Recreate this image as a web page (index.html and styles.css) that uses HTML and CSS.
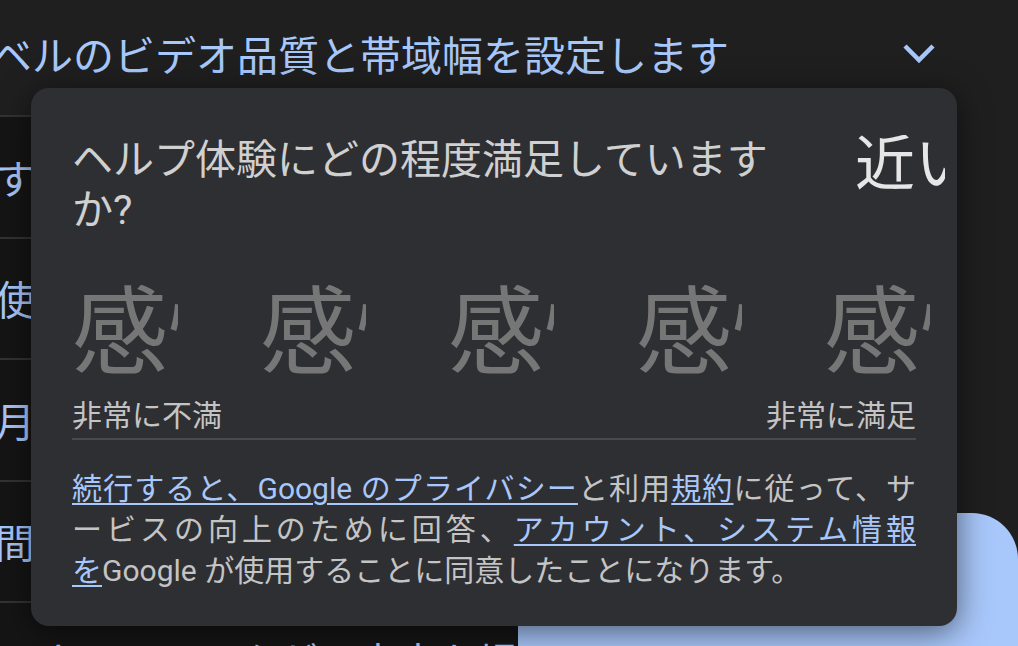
FILE: index.html
```html
<!DOCTYPE html>
<html lang="ja">
<head>
    <meta charset="UTF-8">
    <meta name="viewport" content="width=device-width, initial-scale=1.0">
    <link rel="stylesheet" href="styles.css">
    <title>ヘルプ</title>
</head>
<body>

<div class="page">
    <div class="topbar">
        <span class="topbar-title">ベルのビデオ品質と帯域幅を設定します</span>
        <svg class="chevron" width="34" height="22" viewBox="0 0 34 22">
            <path d="M3 4 L17 18 L31 4" fill="none" stroke="#a8c7fa" stroke-width="4.5"/>
        </svg>
    </div>

    <div class="content">
        <div class="list">
            <div class="list-row"><span class="row-text">すべての設定を表示</span></div>
            <div class="list-row"><span class="row-text">使用するデータ量</span></div>
            <div class="list-row"><span class="row-text">月間の上限</span></div>
            <div class="list-row"><span class="row-text">間隔を選択</span></div>
            <div class="list-row"><span class="row-text row-text-indent">ネットワークが不安定な場合</span></div>
        </div>
        <div class="side">
            <div class="fab"></div>
        </div>
    </div>

    <div class="feedback">
        <div class="feedback-head">
            <h2 class="feedback-title">ヘルプ体験にどの程度満足していますか?</h2>
            <span class="close-icon">近い</span>
        </div>

        <div class="ratings">
            <span class="rating-icon">感情</span>
            <span class="rating-icon">感情</span>
            <span class="rating-icon">感情</span>
            <span class="rating-icon">感情</span>
            <span class="rating-icon">感情</span>
        </div>

        <div class="rating-labels">
            <span>非常に不満</span>
            <span>非常に満足</span>
        </div>

        <p class="legal">
            <span class="legal-line"><a href="#">続行すると、Google のプライバシー</a>と利用<a href="#">規約</a>に従って、サ</span>
            <span class="legal-line">ービスの向上のために回答、<a href="#">アカウント、システム情報</a></span>
            <span class="legal-line"><a href="#">を</a>Google が使用することに同意したことになります。</span>
        </p>
    </div>
</div>

</body>
</html>
```

FILE: styles.css
```css
body {
    margin: 0;
    padding: 0;
    background-color: #1f1f1f;
    font-family: Roboto, "Noto Sans CJK JP", sans-serif;
    overflow: hidden;
}

.page {
    position: relative;
    width: 1018px;
    height: 646px;
    overflow: hidden;
}

.topbar {
    height: 115px;
    display: flex;
    align-items: center;
    justify-content: space-between;
    padding: 0 82px 10px 0;
    box-sizing: border-box;
}

.topbar-title {
    margin-left: -9px;
    font-size: 41px;
    color: #a8c7fa;
    white-space: nowrap;
}

.chevron {
    display: block;
}

.content {
    display: flex;
    height: 531px;
}

.list {
    width: 518px;
    background-color: #151515;
}

.list-row {
    height: 121.5px;
    display: flex;
    align-items: center;
    border-top: 2px solid #333;
    box-sizing: border-box;
    overflow: hidden;
}

.row-text {
    margin-left: -5px;
    font-size: 40px;
    color: #a8c7fa;
    white-space: nowrap;
}

.row-text-indent {
    margin-left: 38px;
    margin-bottom: 5px;
}

.side {
    flex: 1;
    display: flex;
    flex-direction: column;
    justify-content: flex-end;
}

.fab {
    height: 133px;
    background-color: #a8c7fa;
    border-top-right-radius: 46px;
}

/* tarjeta flotante por encima del contenido */
.feedback {
    position: absolute;
    left: 31px;
    top: 88px;
    width: 926px;
    box-sizing: border-box;
    padding: 47px 41px 35px;
    background-color: #2e2f33;
    border-radius: 18px;
    box-shadow: 0 6px 32px rgba(0, 0, 0, 0.55);
}

.feedback-head {
    display: flex;
    justify-content: space-between;
    align-items: flex-start;
}

.feedback-title {
    width: 710px;
    margin: 0;
    font-size: 41px;
    font-weight: normal;
    line-height: 50px;
    color: #d0d0d0;
}

.close-icon {
    width: 90px;
    margin-right: -29px;
    overflow: hidden;
    white-space: nowrap;
    font-size: 60px;
    line-height: 1;
    color: #e6e6e6;
}

.ratings {
    display: flex;
    gap: 82px;
    margin-top: 50px;
}

.rating-icon {
    flex: none;
    width: 106px;
    overflow: hidden;
    white-space: nowrap;
    font-size: 96px;
    line-height: 1;
    color: #767676;
}

.rating-labels {
    display: flex;
    justify-content: space-between;
    margin-top: 17px;
    padding-bottom: 4px;
    border-bottom: 2px solid #48494d;
    font-size: 30px;
    line-height: 36px;
    color: #c4c4c4;
}

.legal {
    margin: 28px 0 0;
    font-size: 30px;
    line-height: 41px;
    color: #c4c4c4;
}

.legal-line {
    display: block;
    white-space: nowrap;
    text-align: justify;
    text-align-last: justify;
}

.legal-line:last-child {
    text-align-last: left;
}

.legal a {
    color: #a8c7fa;
    text-decoration: underline;
    text-decoration-thickness: 2px;
    text-underline-offset: 4px;
}
```
